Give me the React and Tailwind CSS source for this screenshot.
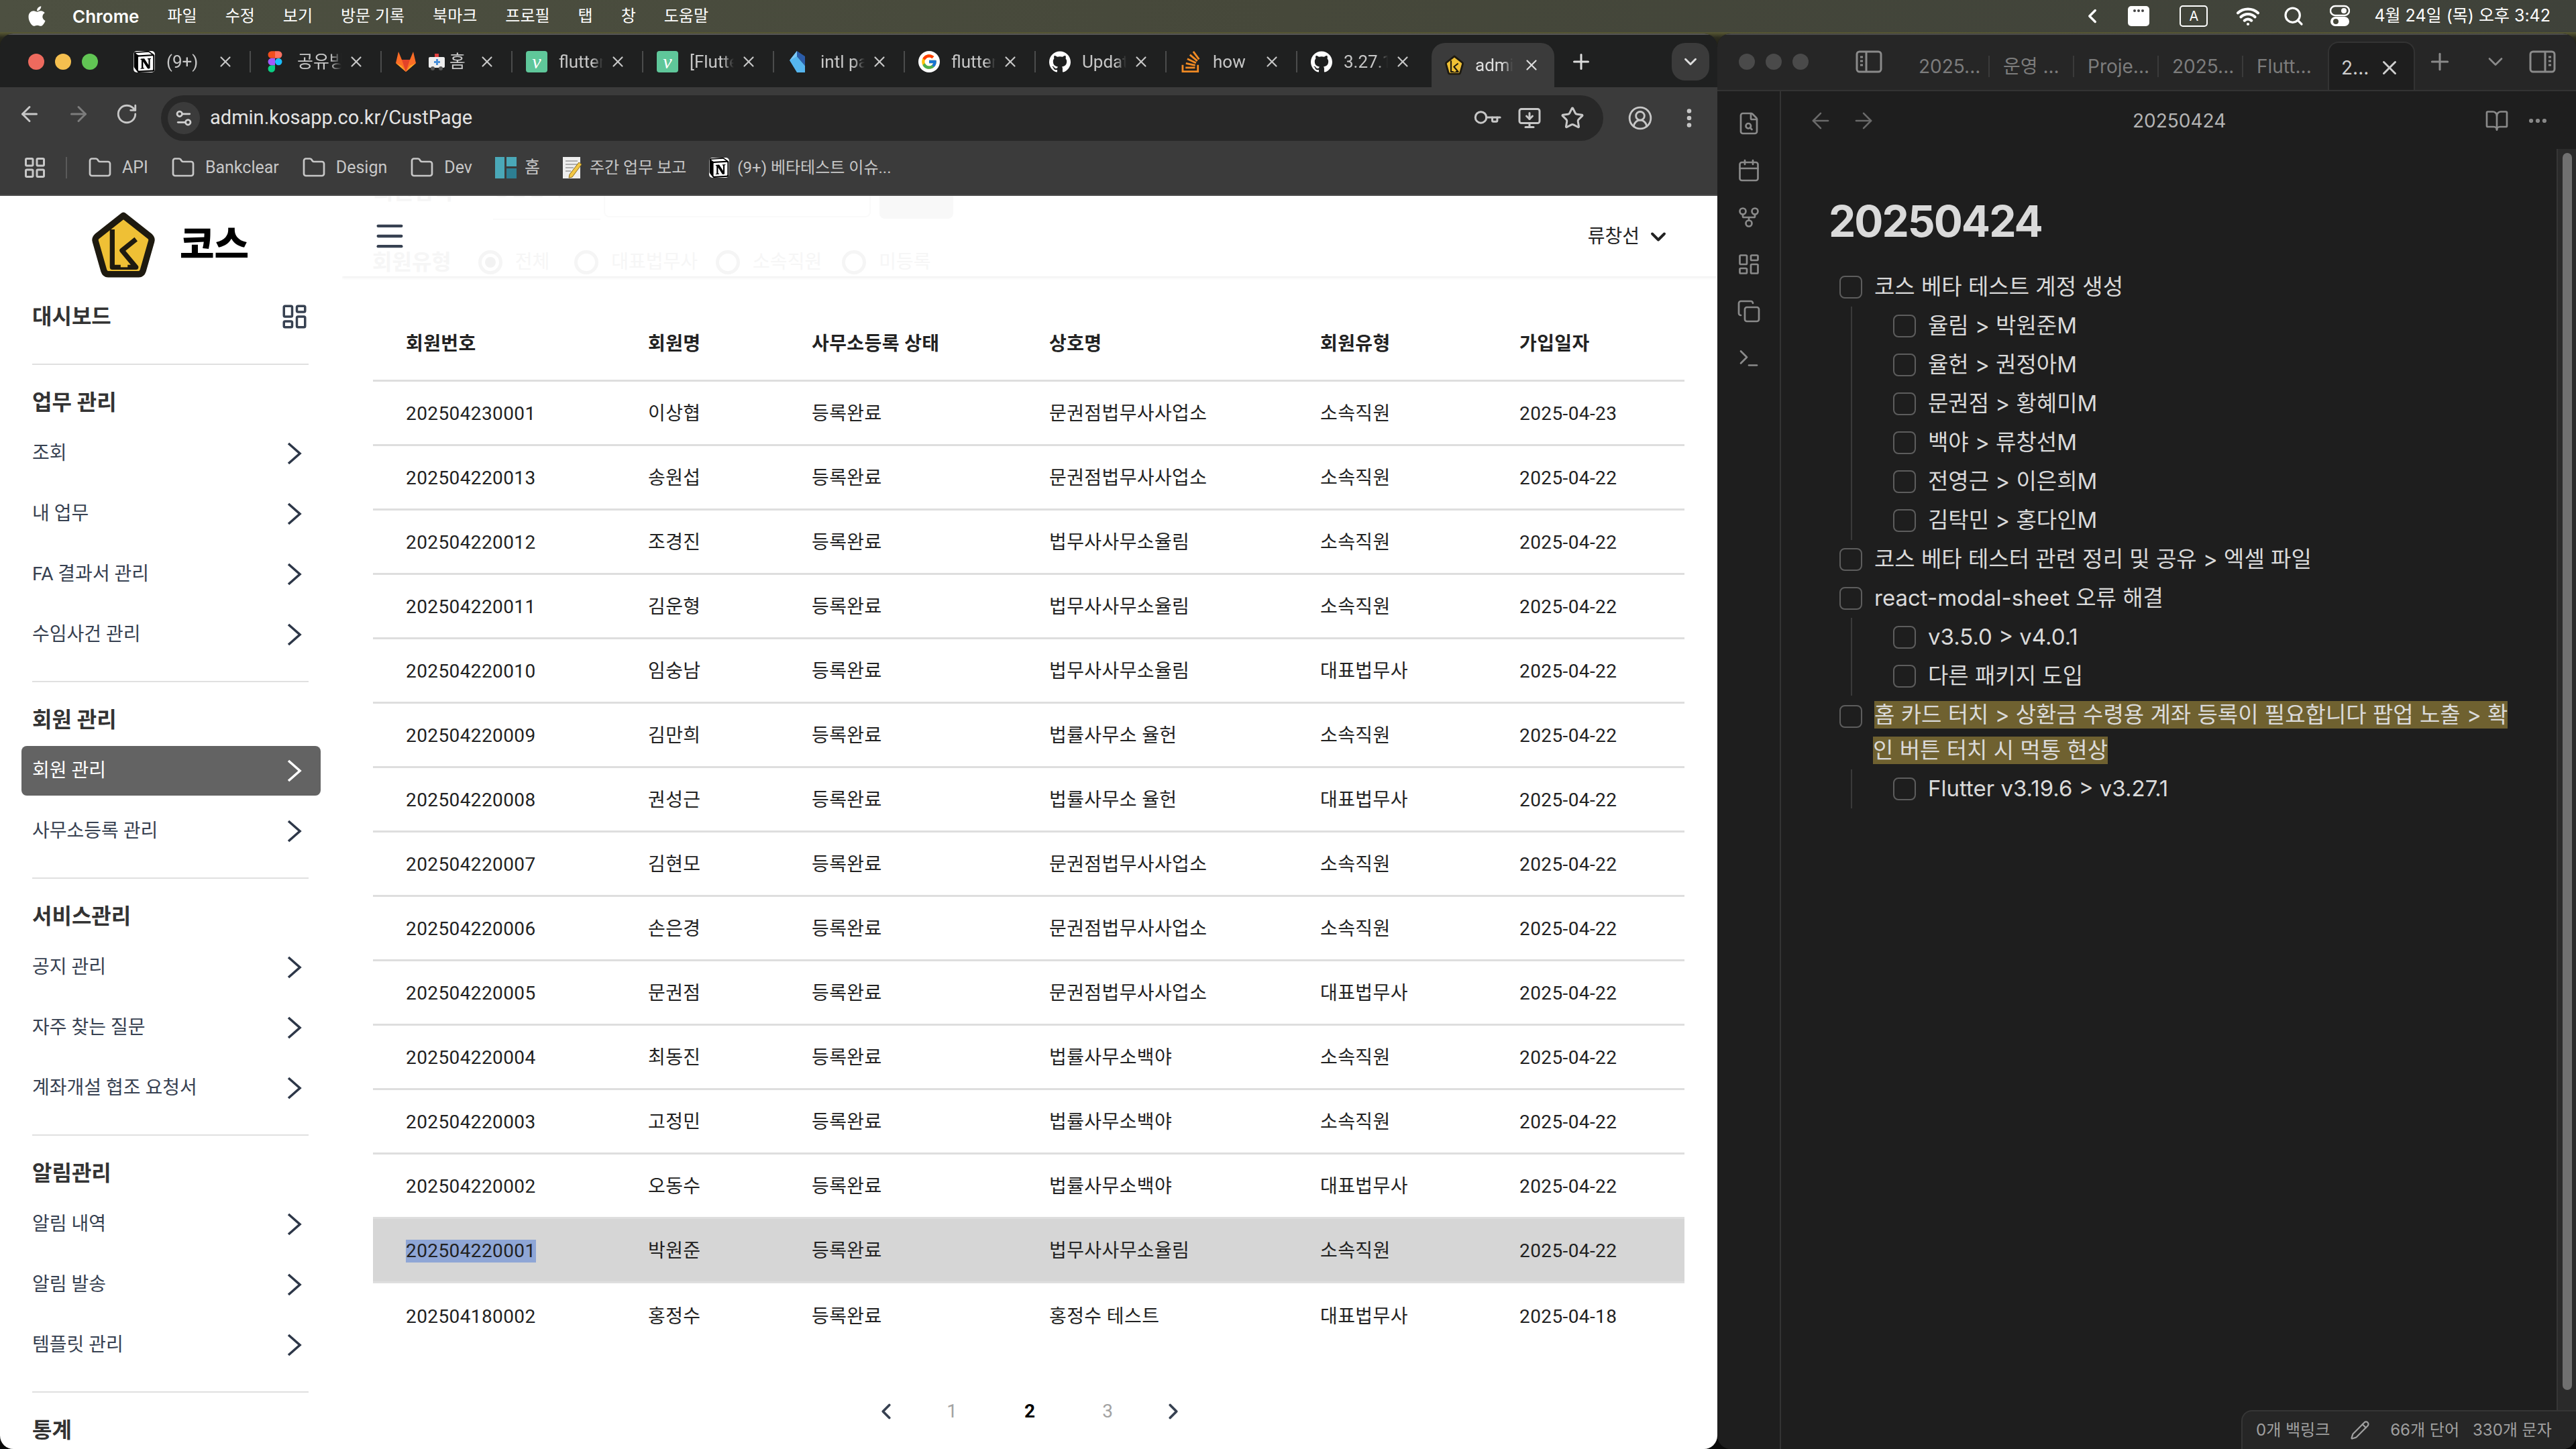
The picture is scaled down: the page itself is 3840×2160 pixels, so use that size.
import React from 'react';
import {
  ArrowLeft, ArrowRight, RotateCw, Settings2, Key, MonitorDown, Star, CircleUserRound, EllipsisVertical,
  Plus, ChevronDown, ChevronLeft, ChevronRight, X, Folder, LayoutGrid, Wifi, Search, Menu, LayoutDashboard,
  FileSearch, Calendar, GitFork, Copy, Terminal, BookOpen, Ellipsis, Pencil,
} from 'lucide-react';
import { SiNotion, SiGithub, SiStackoverflow } from 'react-icons/si';
import { FaApple } from 'react-icons/fa';
import { FcGoogle } from 'react-icons/fc';

const menuItems = ['파일', '수정', '보기', '방문 기록', '북마크', '프로필', '탭', '창', '도움말'];

const KosLogo = ({ size = 96 }) => (
  <svg width={size} height={size} viewBox="0 0 96 96">
    <path d="M48 6 L86 36 C88 38 89 40 88 43 L76 85 C75 88 73 90 70 90 H26 C23 90 21 88 20 85 L8 43 C7 40 8 38 10 36 Z" fill="#efc035" stroke="#1e1a10" strokeWidth="9" strokeLinejoin="round" />
    <path d="M32 26 V80 H66 L46 56 L66 40" fill="none" stroke="#1e1a10" strokeWidth="7" strokeLinejoin="round" />
    <path d="M44 72 h10 v8 h-10z" fill="#efc035" />
  </svg>
);

const NotionIcon = ({ size = 32 }) => (
  <span className="flex items-center justify-center bg-white rounded-[5px] text-black shrink-0" style={{ width: size, height: size }}>
    <SiNotion size={size} />
  </span>
);

const FigmaIcon = () => (
  <svg width="32" height="32" viewBox="-10 0 58 57">
    <path d="M19 28.5a9.5 9.5 0 1 1 19 0 9.5 9.5 0 0 1-19 0z" fill="#1ABCFE" />
    <path d="M0 47.5A9.5 9.5 0 0 1 9.5 38H19v9.5a9.5 9.5 0 1 1-19 0z" fill="#0ACF83" />
    <path d="M19 0v19h9.5a9.5 9.5 0 1 0 0-19H19z" fill="#FF7262" />
    <path d="M0 9.5A9.5 9.5 0 0 0 9.5 19H19V0H9.5A9.5 9.5 0 0 0 0 9.5z" fill="#F24E1E" />
    <path d="M0 28.5A9.5 9.5 0 0 0 9.5 38H19V19H9.5A9.5 9.5 0 0 0 0 28.5z" fill="#A259FF" />
  </svg>
);

const GitlabIcon = () => (
  <svg width="32" height="32" viewBox="0 0 32 32">
    <path d="M16 31 L1 18 L5 1 L10 13 H22 L27 1 L31 18 Z" fill="#fc6d26" />
    <path d="M16 31 L10 13 H22 Z" fill="#e24329" />
    <path d="M16 31 L1 18 L10 22 Z M16 31 L31 18 L22 22 Z" fill="#fca326" />
  </svg>
);

const VelogIcon = () => (
  <span className="flex items-center justify-center w-[32px] h-[32px] rounded-[4px] bg-[#5fc79a] text-white italic text-[30px] leading-none font-['Liberation_Serif',serif]">
    v
  </span>
);

const DartIcon = () => (
  <svg width="32" height="32" viewBox="0 0 32 32">
    <path d="M14 0 L26 8 V22 L14 8 Z" fill="#2b5ca8" />
    <path d="M14 0 L3 14 L14 32 H26 V22 L14 8 Z" fill="#55b5ee" />
    <path d="M14 0 L3 14 L14 8Z" fill="#7cc8f5" />
  </svg>
);

const GoogleIcon = () => (
  <span className="flex items-center justify-center w-[32px] h-[32px] rounded-full bg-white">
    <FcGoogle size={26} />
  </span>
);

const GithubIcon = () => <SiGithub size={32} color="#ffffff" />;

const StackIcon = () => <SiStackoverflow size={32} color="#f08a24" />;

const Ambulance = () => (
  <svg width="26" height="28" viewBox="0 0 26 28">
    <rect x="1" y="7" width="24" height="16" rx="2" fill="#eeeeee" />
    <rect x="10" y="2" width="6" height="5" fill="#e04040" />
    <path d="M12 10h3v3h3v3h-3v3h-3v-3H9v-3h3z" fill="#4a90d9" />
    <circle cx="7" cy="24" r="3" fill="#555" />
    <circle cx="19" cy="24" r="3" fill="#555" />
  </svg>
);

const NavChevron = ({ color }) => (
  <svg width="24" height="36" viewBox="0 0 24 36" fill="none" stroke={color} strokeWidth="3.6">
    <path d="M3 3 L20 18 L3 33" />
  </svg>
);

const tabs = [
  { icon: <NotionIcon />, title: '(9+)' },
  { icon: <FigmaIcon />, title: '공유방' },
  { icon: <GitlabIcon />, title: '홈', prefix: <Ambulance /> },
  { icon: <VelogIcon />, title: 'flutter' },
  { icon: <VelogIcon />, title: '[Flutter' },
  { icon: <DartIcon />, title: 'intl pa' },
  { icon: <GoogleIcon />, title: 'flutter' },
  { icon: <GithubIcon />, title: 'Update' },
  { icon: <StackIcon />, title: 'how' },
  { icon: <GithubIcon />, title: '3.27.1' },
];

const ChromeTab = ({ tab, last }) => (
  <div className="flex items-center w-[195px] h-[56px] shrink-0">
    <span className="ml-[20px] w-[32px] flex justify-center shrink-0">{tab.icon}</span>
    <span className="ml-[17px] w-[66px] flex items-center gap-[6px] overflow-hidden whitespace-nowrap text-[26px] text-[#c7c7c7] [mask-image:linear-gradient(90deg,#000_75%,transparent)]">
      {tab.prefix}
      {tab.title}
    </span>
    <X size={26} color="#c7c7c7" strokeWidth={2} className="ml-[9px] shrink-0" />
    {!last && <span className="ml-auto w-[2px] h-[32px] bg-[#4b4c4c]" />}
  </div>
);

const BookmarkFolder = ({ label }) => (
  <div className="flex items-center gap-[15px]">
    <Folder size={36} color="#c7c7c7" strokeWidth={1.8} />
    <span>{label}</span>
  </div>
);

const memberRows = [
  ['202504230001', '이상협', '등록완료', '문권점법무사사업소', '소속직원', '2025-04-23'],
  ['202504220013', '송원섭', '등록완료', '문권점법무사사업소', '소속직원', '2025-04-22'],
  ['202504220012', '조경진', '등록완료', '법무사사무소율림', '소속직원', '2025-04-22'],
  ['202504220011', '김운형', '등록완료', '법무사사무소율림', '소속직원', '2025-04-22'],
  ['202504220010', '임숭남', '등록완료', '법무사사무소율림', '대표법무사', '2025-04-22'],
  ['202504220009', '김만희', '등록완료', '법률사무소 율헌', '소속직원', '2025-04-22'],
  ['202504220008', '권성근', '등록완료', '법률사무소 율헌', '대표법무사', '2025-04-22'],
  ['202504220007', '김현모', '등록완료', '문권점법무사사업소', '소속직원', '2025-04-22'],
  ['202504220006', '손은경', '등록완료', '문권점법무사사업소', '소속직원', '2025-04-22'],
  ['202504220005', '문권점', '등록완료', '문권점법무사사업소', '대표법무사', '2025-04-22'],
  ['202504220004', '최동진', '등록완료', '법률사무소백야', '소속직원', '2025-04-22'],
  ['202504220003', '고정민', '등록완료', '법률사무소백야', '소속직원', '2025-04-22'],
  ['202504220002', '오동수', '등록완료', '법률사무소백야', '대표법무사', '2025-04-22'],
  ['202504220001', '박원준', '등록완료', '법무사사무소율림', '소속직원', '2025-04-22'],
  ['202504180002', '홍정수', '등록완료', '홍정수 테스트', '대표법무사', '2025-04-18'],
];

const sections = [
  { title: '업무 관리', items: ['조회', '내 업무', 'FA 결과서 관리', '수임사건 관리'] },
  { title: '회원 관리', items: ['회원 관리', '사무소등록 관리'], active: '회원 관리' },
  { title: '서비스관리', items: ['공지 관리', '자주 찾는 질문', '계좌개설 협조 요청서'] },
  { title: '알림관리', items: ['알림 내역', '알림 발송', '템플릿 관리'] },
];

const NavItem = ({ label, active }) => (
  <div className="py-[8px] px-[32px]">
    <div className={`flex items-center justify-between h-[74px] pl-[16px] pr-[27px] rounded-[8px] text-[28px] ${active ? 'bg-[#636363] text-white' : 'text-[#374151]'}`}>
      <span>{label}</span>
      <NavChevron color={active ? '#ffffff' : '#2d3748'} />
    </div>
  </div>
);

const Sidebar = () => (
  <aside className="w-[510px] shrink-0 bg-white overflow-hidden">
    <div className="h-[145px] flex items-center pl-[134px] gap-[34px]">
      <KosLogo size={100} />
      <span className="text-[56px] font-black text-black leading-none">코스</span>
    </div>
    <div className="h-[70px] mb-[35px] flex items-center justify-between pl-[48px] pr-[50px]">
      <span className="text-[32px] font-semibold text-[#333333]">대시보드</span>
      <LayoutDashboard size={42} color="#374151" strokeWidth={2} />
    </div>
    {sections.map((section) => (
      <div key={section.title}>
        <div className="mx-[48px] w-[412px] h-[2px] bg-[#e0e0e0]" />
        <div className="pt-[39px] pb-[24px]">
          <div className="h-[34px] mb-[14px] pl-[48px] flex items-center text-[32px] font-bold text-[#333333]">{section.title}</div>
          {section.items.map((item) => (
            <NavItem key={item} label={item} active={section.active === item} />
          ))}
        </div>
      </div>
    ))}
    <div className="mx-[48px] w-[412px] h-[2px] bg-[#e0e0e0]" />
    <div className="pt-[39px]">
      <div className="h-[34px] pl-[48px] flex items-center text-[32px] font-bold text-[#333333]">통계</div>
    </div>
  </aside>
);

const GhostRadio = ({ label, checked, className }) => (
  <div className={`flex items-center gap-[19px] ${className}`}>
    <span className="flex items-center justify-center w-[36px] h-[36px] rounded-full border-[5px] border-[#f5f5f5]">
      {checked && <span className="w-[16px] h-[16px] rounded-full bg-[#f2f2f2]" />}
    </span>
    <span>{label}</span>
  </div>
);

// 스크롤로 헤더 뒤에 비쳐 보이는 검색 폼
const GhostForm = () => (
  <div className="absolute inset-0 overflow-hidden text-[28px] text-[#f6f6f6]">
    <span className="absolute left-[47px] -top-[30px] text-[32px] font-bold">회원검색</span>
    <span className="absolute left-[225px] -top-[30px]">통합검색</span>
    <div className="absolute left-[225px] -top-[40px] w-[160px] h-[76px] border-b-2 border-[#fafafa]" />
    <div className="absolute left-[390px] -top-[20px] w-[398px] h-[52px] rounded-[8px] border-2 border-[#fafafa]" />
    <div className="absolute left-[801px] -top-[20px] w-[110px] h-[54px] rounded-[8px] bg-[#f8f8f8]" />
    <div className="absolute left-[45px] top-[81px] flex items-center h-[36px]">
      <span className="text-[32px] font-bold mr-[40px]">회원유형</span>
      <GhostRadio label="전체" checked className="mr-[37px]" />
      <GhostRadio label="대표법무사" className="mr-[27px]" />
      <GhostRadio label="소속직원" className="mr-[30px]" />
      <GhostRadio label="미등록" />
    </div>
  </div>
);

const gridCols = 'grid grid-cols-[361px_244px_354px_404px_297px_1fr] pl-[49px] pt-[3px] items-center tracking-[0.4px]';

const MemberTable = () => (
  <div className="mx-[46px] mt-[45px] w-[1955px]">
    <div className={`${gridCols} h-[112px] border-b-[3px] border-[#dedede] text-[28px] font-bold text-[#222222]`}>
      <span>회원번호</span>
      <span>회원명</span>
      <span>사무소등록 상태</span>
      <span>상호명</span>
      <span>회원유형</span>
      <span>가입일자</span>
    </div>
    {memberRows.map((row, idx) => {
      const selected = row[0] === '202504220001';
      return (
        <div
          key={row[0]}
          className={`${gridCols} h-[96px] text-[28px] text-[#222222] ${idx < memberRows.length - 1 ? 'border-b-[3px] border-[#dedede]' : ''} ${selected ? 'bg-[#d6d6d6]' : ''}`}
        >
          {row.map((cell, i) => (
            <span key={i}>
              {i === 0 && selected ? <span className="inline-block h-[34px] leading-[34px] bg-[#8fa6d6]">{cell}</span> : cell}
            </span>
          ))}
        </div>
      );
    })}
  </div>
);

const Pagination = () => (
  <div className="mt-[60px] h-[70px] flex items-center justify-center text-[28px]">
    <span className="w-[80px] flex justify-center"><ChevronLeft size={38} strokeWidth={2.4} color="#374151" /></span>
    <span className="w-[116px] text-center text-[#a3a3a3]">1</span>
    <span className="w-[116px] text-center font-bold text-black">2</span>
    <span className="w-[116px] text-center text-[#a3a3a3]">3</span>
    <span className="w-[80px] flex justify-center"><ChevronRight size={38} strokeWidth={2.4} color="#374151" /></span>
  </div>
);

const MainContent = () => (
  <main className="flex-1 bg-white overflow-hidden">
    <header className="relative h-[120px] bg-white shadow-[0_2px_4px_rgba(0,0,0,0.07)]">
      <GhostForm />
      <div className="relative h-[120px] flex items-start justify-between pl-[45px] pr-[70px] pt-[35px]">
        <Menu size={52} color="#374151" strokeWidth={2} className="-mt-[1px]" />
        <div className="flex items-center gap-[10px] text-[28px] text-[#222222] h-[52px]">
          <span>류창선</span>
          <ChevronDown size={36} strokeWidth={2.6} color="#222222" />
        </div>
      </div>
    </header>
    <MemberTable />
    <Pagination />
  </main>
);

const ChromeWindow = () => (
  <section className="w-[2560px] shrink-0 flex flex-col rounded-[20px] overflow-hidden font-[Roboto,'Noto_Sans_CJK_KR',sans-serif]">
    <div className="h-[80px] bg-[#1f2020] flex items-start pt-[12px] border-t-2 border-[#555555]">
      <div className="flex items-center gap-[16px] pl-[42px] w-[179px] h-[56px] shrink-0">
        <span className="w-[24px] h-[24px] rounded-full bg-[#ed6a5e]" />
        <span className="w-[24px] h-[24px] rounded-full bg-[#f5bf4f]" />
        <span className="w-[24px] h-[24px] rounded-full bg-[#61c554]" />
      </div>
      {tabs.map((tab, idx) => (
        <ChromeTab key={idx} tab={tab} last={idx === tabs.length - 1} />
      ))}
      <div className="ml-[5px] flex items-center w-[183px] h-[66px] rounded-t-[20px] bg-[#3b3b3b] shrink-0">
        <div className="flex items-center h-[56px] pl-[19px]">
          <KosLogo size={30} />
          <span className="ml-[16px] w-[56px] overflow-hidden whitespace-nowrap text-[26px] text-[#dddddd] [mask-image:linear-gradient(90deg,#000_75%,transparent)]">admin</span>
          <X size={26} color="#dddddd" strokeWidth={2} className="ml-[15px]" />
        </div>
      </div>
      <div className="flex items-center h-[56px] ml-[22px]">
        <Plus size={36} color="#dddddd" strokeWidth={2} />
      </div>
      <div className="ml-auto mr-[12px] flex items-center justify-center w-[56px] h-[56px] rounded-[20px] bg-[#3b3b3b]">
        <ChevronDown size={30} color="#dddddd" strokeWidth={2.4} />
      </div>
    </div>
    <div className="h-[80px] bg-[#3b3b3b] flex items-center">
      <div className="flex items-center pl-[26px] w-[240px] gap-[37px] shrink-0">
        <ArrowLeft size={36} color="#c7c7c7" strokeWidth={2} />
        <ArrowRight size={36} color="#7d7d7d" strokeWidth={2} />
        <RotateCw size={34} color="#c7c7c7" strokeWidth={2} />
      </div>
      <div className="w-[2150px] h-[68px] mt-[12px] rounded-full bg-[#282828] flex items-center pl-[10px] pr-[28px]">
        <span className="w-[48px] h-[48px] rounded-full bg-[#3b3b3b] flex items-center justify-center">
          <Settings2 size={30} color="#d0d0d0" strokeWidth={2.2} />
        </span>
        <span className="ml-[15px] text-[29px] text-[#e3e3e3]">admin.kosapp.co.kr/CustPage</span>
        <div className="ml-auto flex items-center gap-[28px]">
          <Key size={36} color="#c7c7c7" strokeWidth={2} className="rotate-[45deg]" />
          <MonitorDown size={36} color="#c7c7c7" strokeWidth={2} />
          <Star size={36} color="#c7c7c7" strokeWidth={2} />
        </div>
      </div>
      <div className="flex items-center mt-[12px] ml-[36px] gap-[36px]">
        <CircleUserRound size={38} color="#c7c7c7" strokeWidth={1.8} />
        <EllipsisVertical size={36} color="#c7c7c7" strokeWidth={2.4} />
      </div>
    </div>
    <div className="h-[82px] bg-[#3b3b3b] flex items-center pl-[34px] text-[25px] text-[#c7c7c7] border-b-2 border-[#4a4a4a]">
      <LayoutGrid size={36} color="#c7c7c7" strokeWidth={2} />
      <span className="ml-[28px] mr-[31px] w-[2px] h-[32px] bg-[#5a5a5a]" />
      <div className="flex items-center gap-[34px]">
        <BookmarkFolder label="API" />
        <BookmarkFolder label="Bankclear" />
        <BookmarkFolder label="Design" />
        <BookmarkFolder label="Dev" />
        <div className="flex items-center gap-[12px]">
          <svg width="32" height="32" viewBox="0 0 32 32">
            <rect x="0" y="0" width="14" height="32" fill="#4aa8b8" />
            <rect x="17" y="0" width="15" height="14" fill="#4aa8b8" />
            <rect x="17" y="17" width="15" height="15" fill="#2d7f93" />
          </svg>
          <span>홈</span>
        </div>
        <div className="flex items-center gap-[12px]">
          <svg width="28" height="32" viewBox="0 0 28 32">
            <rect x="0" y="0" width="26" height="32" fill="#eeeeee" />
            <path d="M4 6h18M4 11h18M4 16h12M4 21h8" stroke="#999999" strokeWidth="1.5" />
            <path d="M24 8 L28 11 L14 30 L9 31 L10 26 Z" fill="#f2c744" stroke="#8a6a1d" strokeWidth="1" />
          </svg>
          <span className="text-[24px]">주간 업무 보고</span>
        </div>
        <div className="flex items-center gap-[12px]">
          <NotionIcon size={30} />
          <span className="text-[24px]">(9+) 베타테스트 이슈...</span>
        </div>
      </div>
    </div>
    <div className="flex-1 flex min-h-0">
      <Sidebar />
      <MainContent />
    </div>
  </section>
);

const PanelIcon = ({ right }) => (
  <svg width="40" height="34" viewBox="0 0 40 34" fill="none" stroke="#8a8a8a" strokeWidth="3" className={right ? 'scale-x-[-1]' : ''}>
    <rect x="2" y="2" width="36" height="30" rx="4" />
    <path d="M16 2 V32" />
    <path d="M7 10h4M7 16h4M7 22h4" />
  </svg>
);

const obsidianTabs = ['2025...', '운영 ...', 'Proje...', '2025...', 'Flutt...'];

const ObsidianTitleBar = () => (
  <div className="h-[86px] shrink-0 bg-[#262626] border-b-2 border-[#333333] flex items-end border-t-2 border-t-[#4a4a4a]">
    <div className="h-[84px] flex items-center pl-[32px] gap-[16px] w-[200px] shrink-0">
      <span className="w-[24px] h-[24px] rounded-full bg-[#4a4a4a]" />
      <span className="w-[24px] h-[24px] rounded-full bg-[#4a4a4a]" />
      <span className="w-[24px] h-[24px] rounded-full bg-[#4a4a4a]" />
    </div>
    <div className="h-[84px] flex items-center w-[80px] pl-[6px] shrink-0">
      <PanelIcon />
    </div>
    {obsidianTabs.map((t, i) => (
      <div key={i} className={`w-[126px] h-[32px] mb-[19px] flex items-center pl-[20px] text-[28px] text-[#7c7c7c] shrink-0 whitespace-nowrap ${i < obsidianTabs.length - 1 ? 'border-r-2 border-[#3a3a3a]' : ''}`}>
        <span>{t}</span>
      </div>
    ))}
    <div className="w-[130px] h-[72px] rounded-t-[16px] bg-[#1e1e1e] border-2 border-b-0 border-[#333333] flex items-center pl-[18px] text-[28px] text-[#cfcfcf] shrink-0">
      <span className="mt-[4px]">2...</span>
      <X size={34} color="#cfcfcf" strokeWidth={2} className="ml-[14px] mt-[4px]" />
    </div>
    <div className="h-[84px] flex items-center ml-[17px]">
      <Plus size={40} color="#8a8a8a" strokeWidth={1.8} />
      <ChevronDown size={36} color="#8a8a8a" strokeWidth={1.8} className="ml-[45px]" />
      <span className="ml-[32px]"><PanelIcon right /></span>
    </div>
  </div>
);

const CheckBox = () => <span className="w-[34px] h-[34px] rounded-[8px] border-2 border-[#5d5d5d] shrink-0" />;

const TodoRow = ({ text }) => (
  <div className="h-[58px] flex items-center gap-[18px]">
    <CheckBox />
    <span className="whitespace-nowrap">{text}</span>
  </div>
);

const SubList = ({ items }) => (
  <div className="ml-[31px] border-l-2 border-[#3a3a3a] pl-[61px]">
    {items.map((t) => (
      <TodoRow key={t} text={t} />
    ))}
  </div>
);

const ObsidianWindow = () => (
  <section className="flex-1 flex flex-col rounded-[20px] overflow-hidden bg-[#1e1e1e] font-[Inter,'Noto_Sans_CJK_KR',sans-serif]">
    <ObsidianTitleBar />
    <div className="flex-1 flex min-h-0">
      <div className="w-[95px] shrink-0 border-r-2 border-[#333333] flex flex-col items-center pt-[30px] gap-[34px]">
        <FileSearch size={36} color="#8a8a8a" strokeWidth={1.8} />
        <Calendar size={36} color="#8a8a8a" strokeWidth={1.8} />
        <GitFork size={36} color="#8a8a8a" strokeWidth={1.8} />
        <LayoutDashboard size={36} color="#8a8a8a" strokeWidth={1.8} />
        <Copy size={36} color="#8a8a8a" strokeWidth={1.8} />
        <Terminal size={36} color="#8a8a8a" strokeWidth={1.8} />
      </div>
      <div className="flex-1 relative min-w-0">
        <div className="h-[88px] flex items-center pl-[40px] pr-[40px]">
          <ArrowLeft size={38} color="#6a6a6a" strokeWidth={1.6} />
          <ArrowRight size={38} color="#6a6a6a" strokeWidth={1.6} className="ml-[26px]" />
          <span className="absolute left-[524px] text-[28px] text-[#b4b4b4]">20250424</span>
          <BookOpen size={36} color="#8a8a8a" strokeWidth={1.8} className="ml-auto" />
          <Ellipsis size={34} color="#8a8a8a" strokeWidth={2.4} className="ml-[26px]" />
        </div>
        <div className="pl-[73px] text-[33px] text-[#dadada]">
          <h1 className="mt-[66px] -ml-[2px] h-[80px] leading-[80px] text-[64px] font-bold text-[#dadada] tracking-[-2px]">20250424</h1>
          <div className="mt-[29px]">
            <div className="ml-[14px]">
              <TodoRow text="코스 베타 테스트 계정 생성" />
            </div>
            <SubList items={['율림 > 박원준M', '율헌 > 권정아M', '문권점 > 황혜미M', '백야 > 류창선M', '전영근 > 이은희M', '김탁민 > 홍다인M']} />
            <div className="ml-[14px]">
              <TodoRow text="코스 베타 테스터 관련 정리 및 공유 > 엑셀 파일" />
              <TodoRow text="react-modal-sheet 오류 해결" />
            </div>
            <SubList items={['v3.5.0 > v4.0.1', '다른 패키지 도입']} />
            <div className="ml-[14px] flex items-start gap-[18px] py-[2px]">
              <span className="mt-[12px] flex"><CheckBox /></span>
              <div className="flex flex-col gap-[12px] py-[6px] whitespace-nowrap">
                <span className="block w-fit h-[41px] leading-[41px] bg-[#6f6130]">홈 카드 터치 &gt; 상환금 수령용 계좌 등록이 필요합니다 팝업 노출 &gt; 확</span>
                <span className="block w-fit h-[41px] leading-[41px] -ml-[2px] bg-[#6f6130]">인 버튼 터치 시 먹통 현상</span>
              </div>
            </div>
            <SubList items={['Flutter v3.19.6 > v3.27.1']} />
          </div>
        </div>
        {/* 스크롤바 */}
        <div className="absolute right-0 top-[86px] bottom-0 w-[29px] bg-[#2a2a2a] border-l-2 border-[#363636] flex justify-center pt-[6px] pb-[88px]">
          <div className="w-[14px] h-full rounded-full bg-[#707070]" />
        </div>
        {/* 상태바 */}
        <div className="absolute right-0 bottom-0 w-[499px] h-[58px] bg-[#262626] border-t-2 border-l-2 border-[#363636] rounded-tl-[16px] flex items-center pl-[20px] text-[24px] text-[#a0a0a0] whitespace-nowrap">
          <span>0개 백링크</span>
          <Pencil size={30} color="#a0a0a0" strokeWidth={1.8} className="ml-[30px]" />
          <span className="ml-[30px]">66개 단어</span>
          <span className="ml-[20px]">330개 문자</span>
        </div>
      </div>
    </div>
  </section>
);

const MenuBar = () => (
  <div className="h-[48px] shrink-0 flex items-center bg-[linear-gradient(90deg,#4d5041,#46483a_50%,#3f423a)] text-white text-[24px] font-[Inter,'Noto_Sans_CJK_KR',sans-serif] pl-[38px]">
    <FaApple size={34} />
    <span className="ml-[36px] font-semibold text-[26px]">Chrome</span>
    <div className="ml-[42px] flex items-center gap-[42px]">
      {menuItems.map((m) => (
        <span key={m}>{m}</span>
      ))}
    </div>
    <div className="ml-auto pr-[38px] flex items-center">
      <ChevronLeft size={34} strokeWidth={2.4} />
      <span className="ml-[36px] flex items-start justify-center gap-[2px] pt-[5px] w-[32px] h-[30px] rounded-[5px] bg-white">
        <span className="w-[4px] h-[4px] rounded-full bg-[#444]" />
        <span className="w-[4px] h-[4px] rounded-full bg-[#444]" />
        <span className="w-[4px] h-[4px] rounded-full bg-[#444]" />
      </span>
      <span className="ml-[45px] flex items-center justify-center w-[42px] h-[32px] rounded-[5px] border-2 border-white text-[20px]">A</span>
      <Wifi size={36} strokeWidth={2.8} className="ml-[42px]" />
      <Search size={32} strokeWidth={2.4} className="ml-[34px]" />
      <svg width="30" height="34" viewBox="0 0 30 34" className="ml-[38px]">
        <rect x="1" y="2" width="28" height="14" rx="7" fill="none" stroke="#fff" strokeWidth="2.5" />
        <circle cx="21" cy="9" r="4" fill="#fff" />
        <rect x="1" y="18" width="28" height="14" rx="7" fill="#fff" />
        <circle cx="9" cy="25" r="4" fill="#46483a" />
      </svg>
      <span className="ml-[36px] text-[25px] whitespace-nowrap">4월 24일 (목) 오후 3:42</span>
    </div>
  </div>
);

export default function App() {
  return (
    <div className="w-[3840px] h-[2160px] flex flex-col overflow-hidden bg-[#0a0a0a]">
      <MenuBar />
      <div className="flex-1 flex min-h-0 pt-[2px] bg-[linear-gradient(180deg,#5a5a35_0,#2c2c1e_8px,#0a0a0a_40px)]">
        <ChromeWindow />
        <ObsidianWindow />
      </div>
    </div>
  );
}
